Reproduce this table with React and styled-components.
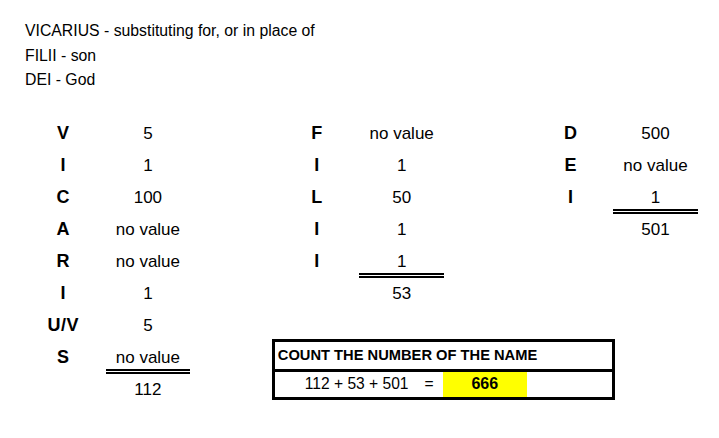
import React from "react";
import styled, { createGlobalStyle } from "styled-components";

const GlobalStyle = createGlobalStyle`
  body {
    margin: 0;
    background: #fff;
    color: #000;
    font-family: "Liberation Sans", Arial, sans-serif;
  }
`;

const words = [
  {
    col: 1,
    total: "112",
    rows: [
      ["V", "5"],
      ["I", "1"],
      ["C", "100"],
      ["A", "no value"],
      ["R", "no value"],
      ["I", "1"],
      ["U/V", "5"],
      ["S", "no value"],
    ],
  },
  {
    col: 4,
    total: "53",
    rows: [
      ["F", "no value"],
      ["I", "1"],
      ["L", "50"],
      ["I", "1"],
      ["I", "1"],
    ],
  },
  {
    col: 7,
    total: "501",
    rows: [
      ["D", "500"],
      ["E", "no value"],
      ["I", "1"],
    ],
  },
];

export default function App() {
  return (
    <Page>
      <GlobalStyle />
      <Intro>
        <div>VICARIUS - substituting for, or in place of</div>
        <div>FILII - son</div>
        <div>DEI - God</div>
      </Intro>

      <Sheet>
        {words.map((w) => (
          <React.Fragment key={w.col}>
            {w.rows.map(([letter, value], i) => (
              <React.Fragment key={i}>
                <Letter $col={w.col} $row={i + 1}>
                  {letter}
                </Letter>
                <Value
                  $col={w.col + 1}
                  $row={i + 1}
                  $last={i === w.rows.length - 1}
                >
                  {value}
                </Value>
              </React.Fragment>
            ))}
            <Value $col={w.col + 1} $row={w.rows.length + 1}>
              {w.total}
            </Value>
          </React.Fragment>
        ))}

        <CountBox>
          <BoxTitle>COUNT THE NUMBER OF THE NAME</BoxTitle>
          <Equation>
            <span>112 + 53 + 501</span>
            <span>=</span>
          </Equation>
          <Result>666</Result>
          <Blank />
        </CountBox>
      </Sheet>
    </Page>
  );
}

const Page = styled.div`
  width: 719px;
  height: 438px;
  overflow: hidden;
`;

const Intro = styled.div`
  padding: 19px 0 0 25px;
  font-size: 15.8px;
  line-height: 24.5px;
`;

const Sheet = styled.div`
  display: grid;
  grid-template-columns: repeat(8, 84.6px);
  grid-template-rows: repeat(9, 32px);
  margin: 25px 0 0 21px;
  font-size: 17px;
`;

const Cell = styled.div`
  grid-column: ${(p) => p.$col};
  grid-row: ${(p) => p.$row};
  display: flex;
  align-items: center;
  justify-content: center;
`;

const Letter = styled(Cell)`
  font-weight: bold;
  font-size: 18px;
  letter-spacing: 0.5px;
`;

const Value = styled(Cell)`
  border-bottom: ${(p) => (p.$last ? "5px double #000" : "none")};
  padding-top: ${(p) => (p.$last ? "5px" : "0")};
`;

const CountBox = styled.div`
  grid-column: 4 / 8;
  grid-row: 8 / 10;
  align-self: start;
  margin: 0 -2px 0 -3px;
  transform: translateY(-3px);
  border: 3px solid #000;
  display: grid;
  grid-template-columns: 168px 84px 1fr;
  grid-template-rows: 30px 25px;
`;

const BoxTitle = styled.div`
  grid-column: 1 / 4;
  border-bottom: 3px solid #000;
  display: flex;
  align-items: center;
  padding-left: 3px;
  font-size: 14.7px;
  font-weight: bold;
`;

const Equation = styled.div`
  display: flex;
  align-items: center;
  gap: 16px;
  padding-left: 30px;
  font-size: 15.6px;
`;

const Result = styled.div`
  background: #ffff00;
  display: flex;
  align-items: center;
  justify-content: center;
  font-weight: bold;
  font-size: 16px;
`;

const Blank = styled.div``;
